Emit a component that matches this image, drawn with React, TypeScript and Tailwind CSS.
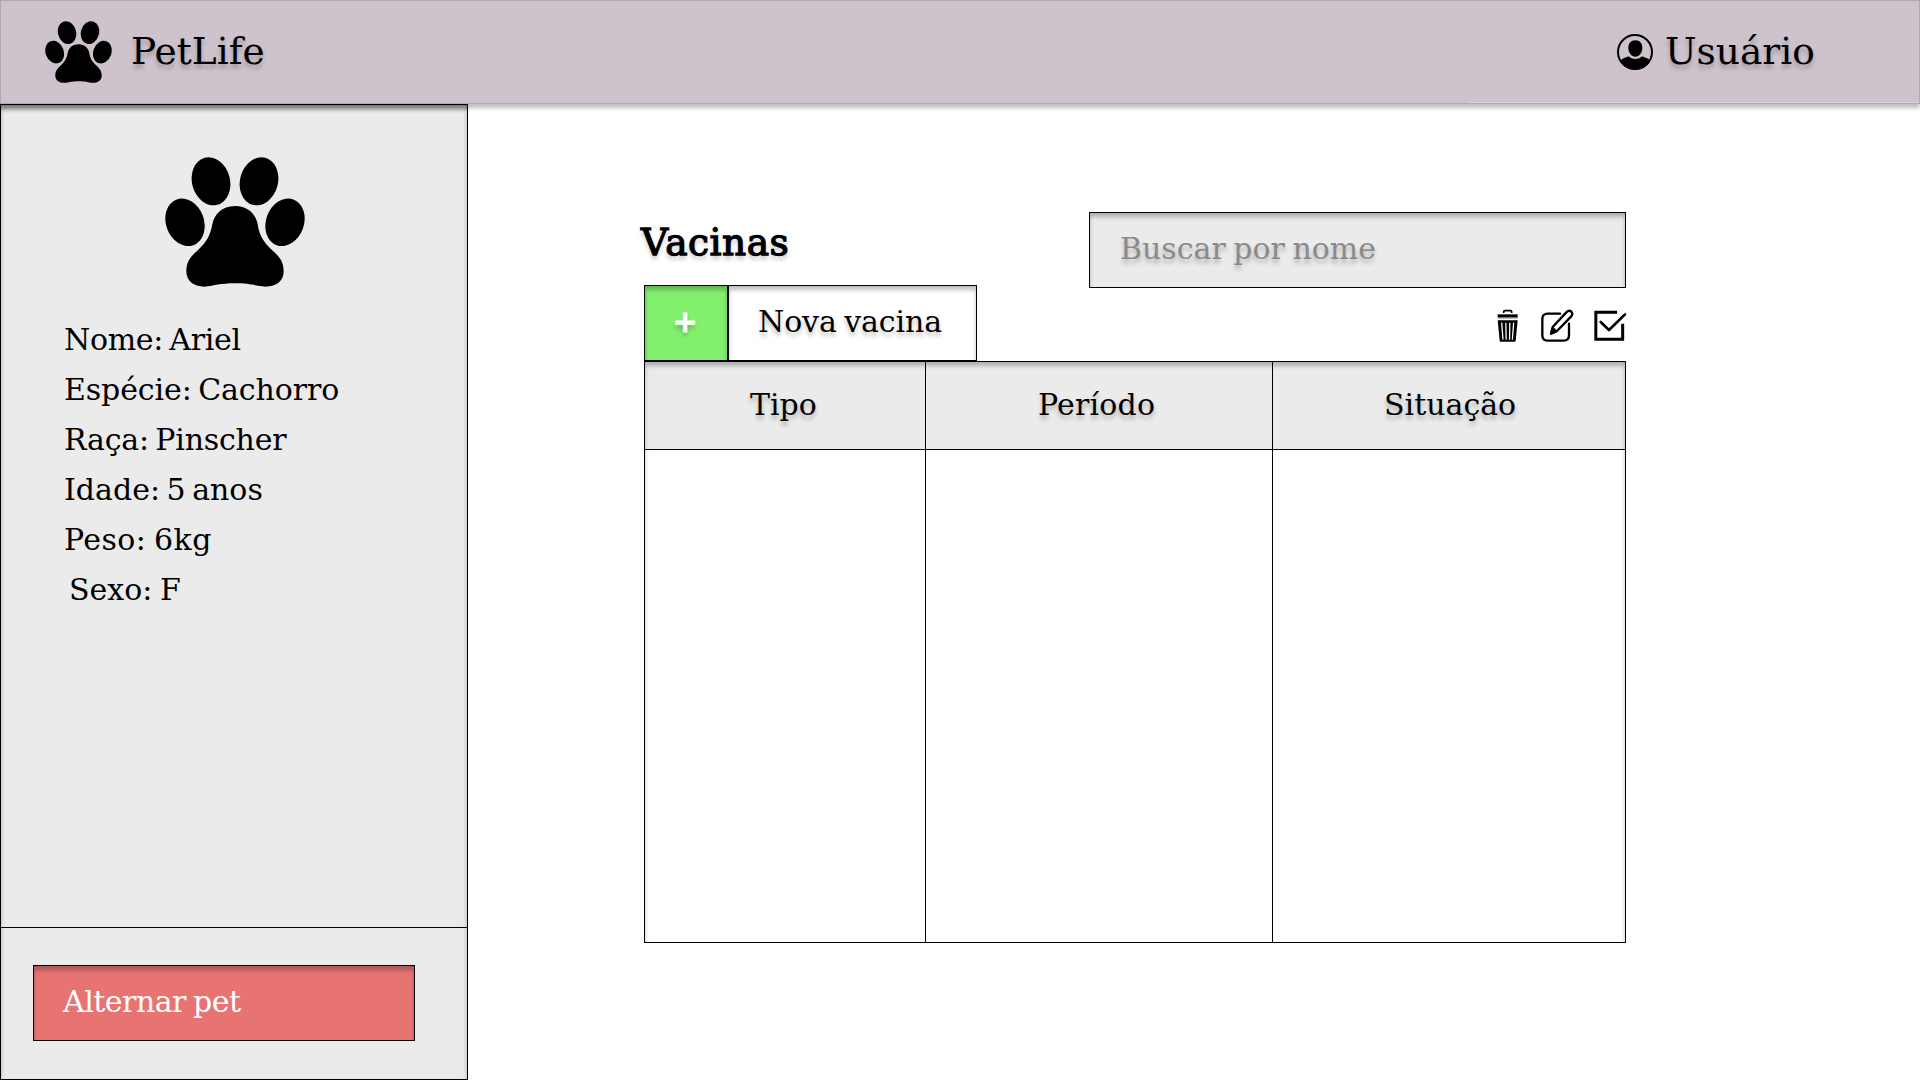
const softText = "[text-shadow:0_4px_4px_rgba(0,0,0,0.25)]";
const inset = "shadow-[inset_0_4px_4px_rgba(0,0,0,0.25)]";

function Paw({ className }: { className: string }) {
  return (
    <svg viewBox="75 50 420 390" className={className} fill="#000">
      <ellipse cx="213" cy="123" rx="57" ry="73" transform="rotate(-15 213 123)" />
      <ellipse cx="357" cy="123" rx="57" ry="73" transform="rotate(15 357 123)" />
      <ellipse cx="135" cy="246" rx="57" ry="73" transform="rotate(-20 135 246)" />
      <ellipse cx="435" cy="246" rx="57" ry="73" transform="rotate(20 435 246)" />
      <path d="M285 197C325 197 347 222 353 252C358 285 370 305 395 328C420 350 431 365 431 393C431 425 405 439 377 439C345 436 330 429 285 429C240 429 225 436 193 439C165 439 139 425 139 393C139 365 150 350 175 328C200 305 211 285 217 252C223 222 245 197 285 197Z" />
    </svg>
  );
}

function UserIcon() {
  return (
    <svg viewBox="532 103 108 108" className="size-9" fill="#000">
      <circle cx="586" cy="157" r="51" fill="none" stroke="#000" strokeWidth="6" />
      <path d="M587 122C601 122 608 132 608 145C608 159 599 171 587 171C575 171 566 159 566 145C566 132 573 122 587 122Z" />
      <path d="M542 184C548 176 557 174 567 170C578 181 596 181 607 170C617 174 626 176 632 184C623 200 606 210 587 210C567 210 550 200 542 184Z" />
    </svg>
  );
}

function TrashIcon() {
  return (
    <svg viewBox="112 58 63 99" className="h-[33px] w-[21px]">
      <path d="M132 70V66Q132 63 136 63H152Q156 63 156 66V70" fill="none" stroke="#000" strokeWidth="5" />
      <path d="M114 74H174V84H114Z" />
      <path d="M114 84H174V88H114Z" fill="#bbb" />
      <path d="M114 92H174L168 153Q168 156 165 156H123Q120 156 120 153Z" />
      <path d="M126 99L130 150M138.500 99L139.500 150M150.500 99L149.500 150M162 99L158 150" stroke="#fff" strokeWidth="3.800" />
    </svg>
  );
}

function EditIcon() {
  return (
    <svg viewBox="243 58 99 99" className="size-[33px]" fill="none" stroke="#000" strokeWidth="7" strokeLinecap="round" strokeLinejoin="round">
      <path d="M300 72H263Q247 72 247 88V137Q247 153 263 153H311Q327 153 327 137V102" />
      <path d="M273 132L278 112L319 68Q327 60 334 66Q340 73 333 81L291 124Z" />
      <path d="M274 131L279 116L288 125Z" fill="#000" />
    </svg>
  );
}

function CheckIcon() {
  return (
    <svg viewBox="401 58 99 99" className="size-[33px]" fill="none" stroke="#000" strokeWidth="9">
      <path d="M470 67.500H406.500V149H487V102" />
      <path d="M421 97L446 121L494 74" strokeLinecap="round" strokeLinejoin="round" strokeWidth="8" />
    </svg>
  );
}

export default function App() {
  return (
    <div className="flex h-[1080px] w-[1920px] flex-col overflow-hidden bg-white font-['DejaVu_Serif',serif] text-[30px] leading-[50px] text-black">
      <header className="flex h-[104px] shrink-0 justify-between border border-[#b3a6b1] bg-[#cec3cd] pl-11 shadow-[0_4px_4px_rgba(0,0,0,0.25)]">
        <div className="flex items-start">
          <Paw className="mt-[19.500px] h-[62px] w-[67px]" />
          <span className={`ml-[19px] mt-[25px] text-[37.500px] ${softText}`}>PetLife</span>
        </div>
        <div className="flex w-[451px] items-start border-b border-[#dad4db] pl-[149px]">
          <div className="mt-[33px]">
            <UserIcon />
          </div>
          <span className={`ml-3 mt-[25px] text-[37.500px] ${softText}`}>Usuário</span>
        </div>
      </header>

      <div className="flex min-h-0 flex-1">
        <aside className="flex w-[468px] shrink-0 flex-col border border-black bg-[#ebebeb] shadow-[inset_0_4px_4px_rgba(0,0,0,0.25),inset_0_7px_4px_-3px_rgba(0,0,0,0.3)]">
          <div className="flex-1 pt-[52px]">
            <Paw className="ml-[164px] h-[130px] w-[140px]" />
            <div className="ml-[63px] mt-[28px] whitespace-nowrap">
              <p className="tracking-[-0.300px] [word-spacing:-3px]">Nome: Ariel</p>
              <p className="tracking-[-0.100px] [word-spacing:-3px]">Espécie: Cachorro</p>
              <p className="tracking-[-0.200px] [word-spacing:-3px]">Raça: Pinscher</p>
              <p className="[word-spacing:-3px]">Idade: 5 anos</p>
              <p className="tracking-[0.400px] [word-spacing:-2px]">Peso: 6kg</p>
              <p className="pl-[5px] [word-spacing:-2px]">Sexo: F</p>
            </div>
          </div>
          <div className="h-[152px] border-t border-black pl-8 pt-[37px]">
            <button
              className={`block h-[76px] w-[382px] border border-black bg-[#e87373] pb-[3px] pl-[29px] text-left tracking-[-0.500px] text-white [word-spacing:-2px] ${inset}`}
            >
              Alternar pet
            </button>
          </div>
        </aside>

        <main className="ml-44 w-[982px] pt-[108px]">
          <div className="flex h-[149px] justify-between">
            <div className="flex flex-col justify-between">
              <h1 className={`-ml-[3px] mt-[5px] text-[37.500px] tracking-[0.500px] [-webkit-text-stroke:1.300px_#000] ${softText}`}>Vacinas</h1>
              <div className="flex h-[76px]">
                <button className={`w-[84px] border border-black bg-[#82f06c] pb-0.5 pr-0.5 text-center font-bold text-white [-webkit-text-stroke:0.800px_#fff] ${inset} ${softText}`}>
                  +
                </button>
                <button className={`w-[249px] border border-black bg-white pb-[3px] pl-[29px] text-left tracking-[-0.100px] [word-spacing:-2px] ${inset} ${softText}`}>
                  Nova vacina
                </button>
              </div>
            </div>
            <div className="flex w-[537px] flex-col">
              <div className={`h-[76px] border border-black bg-[#ebebeb] pl-[30px] pt-[11px] text-[#8a8a8a] [word-spacing:-2px] ${inset} ${softText}`}>
                Buscar por nome
              </div>
              <div className="-mr-px mt-[21px] flex justify-end">
                <TrashIcon />
                <div className="ml-[23px]">
                  <EditIcon />
                </div>
                <div className="ml-5">
                  <CheckIcon />
                </div>
              </div>
            </div>
          </div>

          <div className={`grid h-[582px] grid-cols-[281px_347px_352px] grid-rows-[88px_1fr] border border-black ${inset}`}>
            <div className={`col-span-3 grid grid-cols-subgrid border-b border-black bg-[#ebebeb] ${inset} ${softText}`}>
              <div className="border-r border-black pl-[105px] pt-[18px]">Tipo</div>
              <div className="border-r border-black pl-[112px] pt-[18px] tracking-[0.200px]">Período</div>
              <div className="pl-[111px] pt-[18px]">Situação</div>
            </div>
            <div className="border-r border-black" />
            <div className="border-r border-black" />
            <div />
          </div>
        </main>
      </div>
    </div>
  );
}
